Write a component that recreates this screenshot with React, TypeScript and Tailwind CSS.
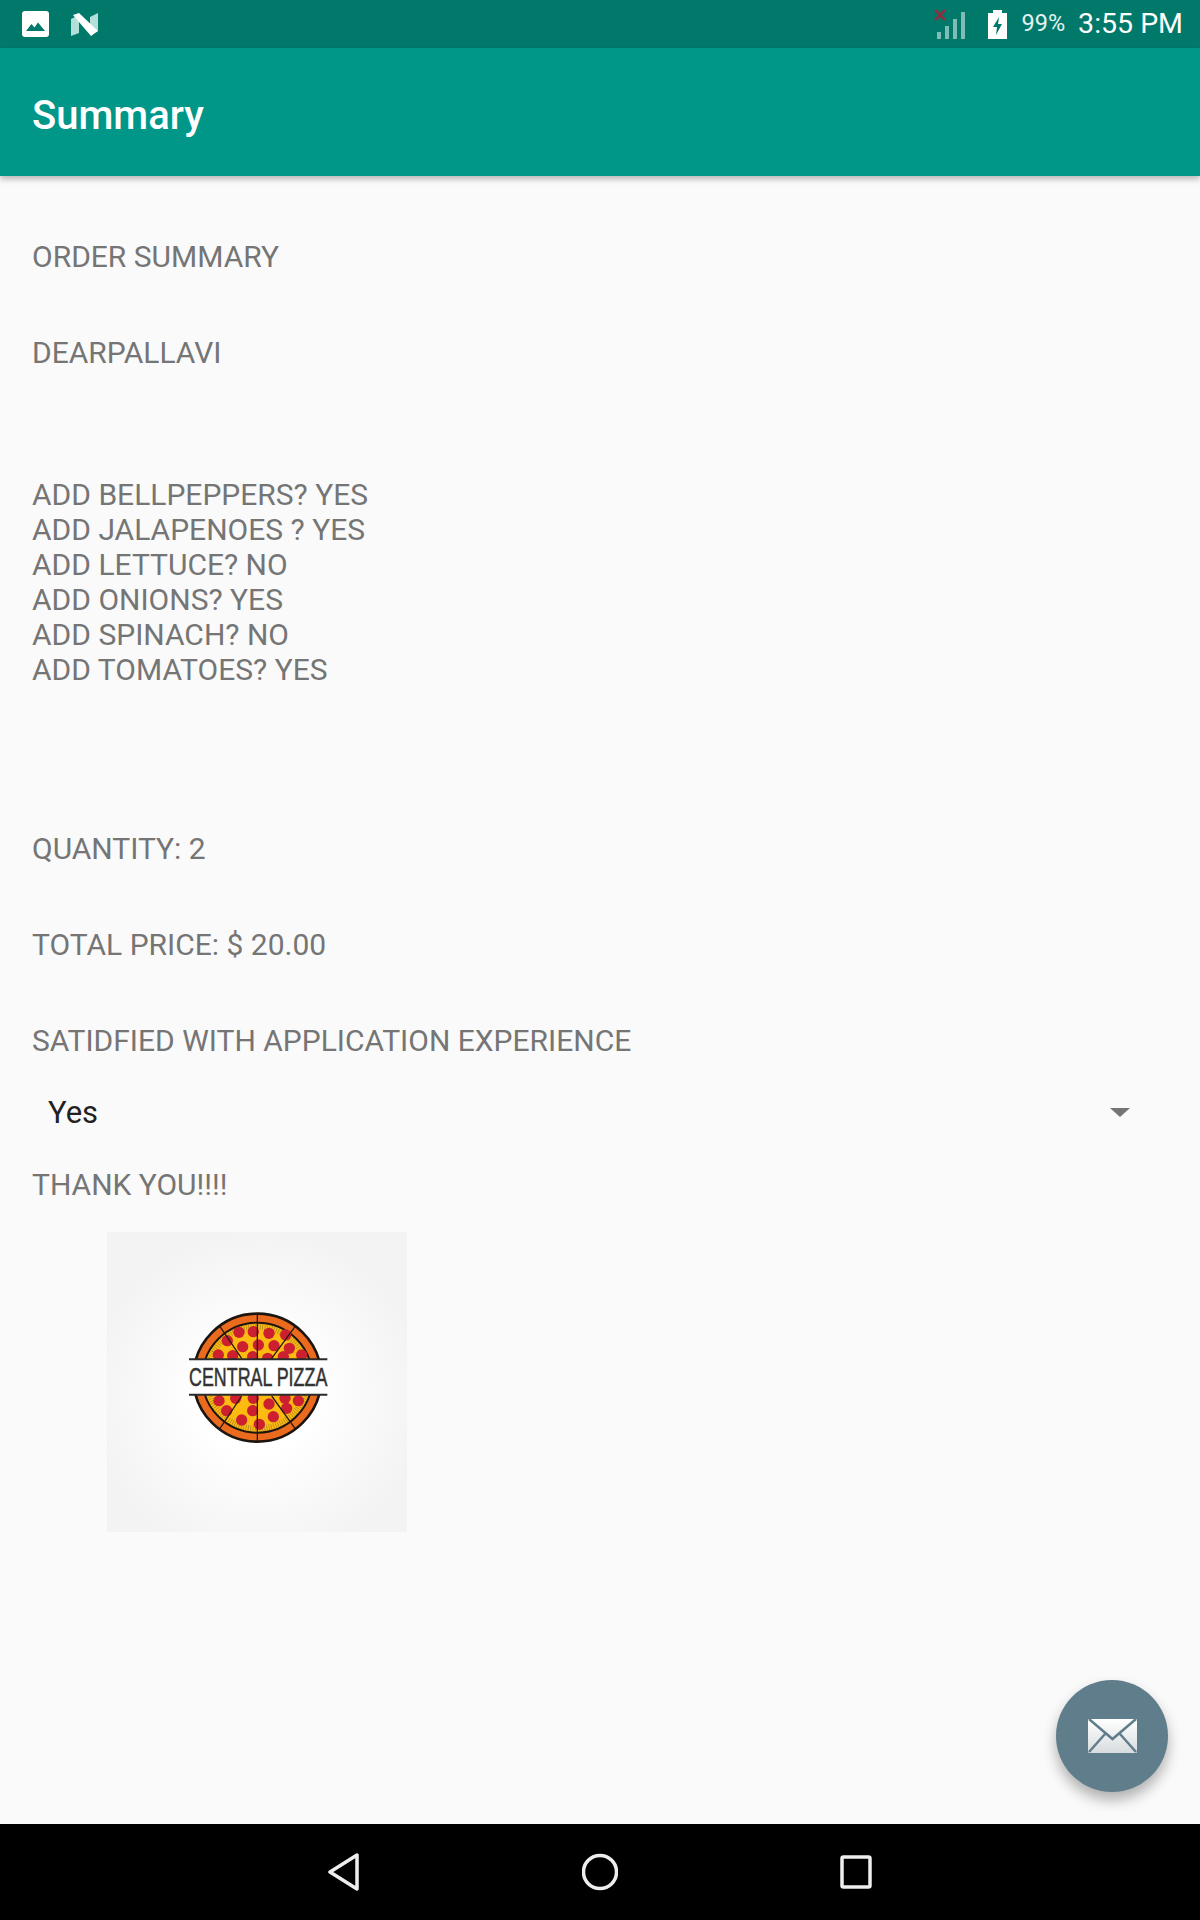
const toppings = [
  "ADD BELLPEPPERS? YES",
  "ADD JALAPENOES ? YES",
  "ADD LETTUCE? NO",
  "ADD ONIONS? YES",
  "ADD SPINACH? NO",
  "ADD TOMATOES? YES",
];

// pepperoni centres, in the logo's own coordinates
const pepperoni = [
  [207, 127], [250, 125], [297, 130], [347, 135], [172, 152], [218, 170], [265, 165], [312, 167],
  [358, 175], [145, 195], [188, 197], [395, 195], [340, 200], [248, 200], [293, 205],
  [147, 332], [197, 325], [250, 325], [297, 342], [345, 325], [385, 332], [170, 362], [248, 362],
  [350, 355], [215, 390], [310, 380], [268, 403],
];

function PizzaLogo() {
  return (
    <svg viewBox="-189 -174 900 900" className="w-full h-full">
      <defs>
        <clipPath id="top-half">
          <rect x="0" y="0" width="520" height="208" />
        </clipPath>
        <clipPath id="bottom-half">
          <rect x="0" y="314" width="520" height="200" />
        </clipPath>
      </defs>
      {["url(#top-half)", "url(#bottom-half)"].map((clip) => (
        <g key={clip} clipPath={clip}>
          <circle cx="262" cy="263" r="192" fill="#ea6a1e" stroke="#1c1410" strokeWidth="8" />
          <circle cx="262" cy="263" r="165" fill="#fdbb12" stroke="#1c1410" strokeWidth="6" />
          <circle cx="262" cy="263" r="153" fill="none" stroke="#a8801a" strokeWidth="18" strokeDasharray="2 5" />
          {pepperoni.map(([x, y]) => (
            <circle key={`${x}-${y}`} cx={x} cy={y} r="17" fill="#cc2030" />
          ))}
          <path
            d="M262 68V458M150 110L215 205M375 110L305 205M150 415L215 318M375 415L305 318"
            stroke="#2a1a10"
            strokeWidth="4"
            fill="none"
          />
        </g>
      ))}
      <path d="M57 208H472M57 314H472" stroke="#2b2b2b" strokeWidth="6" />
      <text
        x="57"
        y="287"
        textLength="415"
        lengthAdjust="spacingAndGlyphs"
        fontSize="80"
        fill="#333333"
        stroke="#333333"
        strokeWidth="1.500"
        style={{ fontFamily: '"Liberation Sans", sans-serif' }}
      >
        CENTRAL PIZZA
      </text>
    </svg>
  );
}

export default function App() {
  return (
    <div className="w-[1200px] h-[1920px] flex flex-col bg-[#fafafa] overflow-hidden font-['Roboto',sans-serif]">
      {/* status bar */}
      <div className="h-12 shrink-0 bg-[#00796b] flex items-center justify-between pl-[22px] pr-[17px] text-white">
        <div className="flex items-center gap-[21px]">
          <svg viewBox="0 0 27 26" className="w-[27px] h-[26px]">
            <rect width="27" height="26" rx="3" fill="#fff" />
            <path d="M4 20L9.500 13L12.500 16.500L16 11.500L23 20Z" fill="#00796b" />
          </svg>
          <svg viewBox="0 0 29 24" className="w-[29px] h-6">
            <path d="M1 7L9 3V21L1 24Z" fill="#b2dfd8" />
            <path d="M20 5L28 1V19L20 22Z" fill="#b2dfd8" />
            <path d="M3 3L9 1L28 19L21 24Z" fill="#fff" />
          </svg>
        </div>
        <div className="flex items-center">
          <svg viewBox="0 0 32 30" className="w-8 h-[30px] mr-[22px]">
            <rect x="3" y="23" width="4" height="7" fill="#fff" fillOpacity="0.5" />
            <rect x="11" y="17" width="4" height="13" fill="#fff" fillOpacity="0.5" />
            <rect x="19" y="10" width="4" height="20" fill="#fff" fillOpacity="0.5" />
            <rect x="27" y="3" width="4" height="27" fill="#fff" fillOpacity="0.5" />
            <path d="M1 1L11 11M11 1L1 11" stroke="#8e2f3d" strokeWidth="2.500" />
          </svg>
          <svg viewBox="0 0 19 29" className="w-[19px] h-[29px] mr-[14px]">
            <path d="M5 0H14V3H19V29H0V3H5Z" fill="#fff" />
            <path d="M11 7L5 17H9L8 25L14 14H10Z" fill="#00796b" />
          </svg>
          <span className="text-[23.500px] mr-[13px] text-white/90">99%</span>
          <span className="text-[28.500px]">3:55 PM</span>
        </div>
      </div>

      {/* app bar */}
      <div className="relative z-10 h-32 shrink-0 bg-[#009688] flex items-center pl-8 pt-[7px] shadow-[0_3px_6px_rgba(0,0,0,0.28)]">
        <h1 className="text-[40px] font-medium text-white">Summary</h1>
      </div>

      {/* content */}
      <div className="relative flex-1 pl-8 pt-[62.500px] text-[30px] leading-[35px] text-[#757575]">
        <p>ORDER SUMMARY</p>
        <p className="mt-[61px]">DEARPALLAVI</p>
        <div className="mt-[107.500px]">
          {toppings.map((t) => (
            <p key={t}>{t}</p>
          ))}
        </div>
        <p className="mt-[143.500px]">QUANTITY: 2</p>
        <p className="mt-[61px]">TOTAL PRICE: $ 20.00</p>
        <p className="mt-[61px]">SATIDFIED WITH APPLICATION EXPERIENCE</p>
        <div className="h-[109px] flex items-center justify-between pl-4 pr-[70px] text-[#212121]">
          <span className="text-[31px]">Yes</span>
          <svg viewBox="0 0 20 9" className="w-5 h-[9px]">
            <path d="M0 0H20L10 9Z" fill="#757575" />
          </svg>
        </div>
        <p>THANK YOU!!!!</p>
        <div className="ml-[75px] mt-[30.500px] w-[300px] h-[300px] bg-[radial-gradient(circle_at_50%_55%,#ffffff_25%,#f3f3f3_75%)]">
          <PizzaLogo />
        </div>

        <button className="absolute right-8 bottom-8 w-28 h-28 rounded-full bg-[#607d8b] flex items-center justify-center shadow-[0_8px_14px_rgba(0,0,0,0.3)]">
          <svg viewBox="0 0 49 34" className="w-[49px] h-[34px]">
            <defs>
              <linearGradient id="mail-fill" x1="0" y1="0" x2="0" y2="1">
                <stop offset="0" stopColor="#ffffff" />
                <stop offset="1" stopColor="#d8dcde" />
              </linearGradient>
            </defs>
            <rect width="49" height="34" rx="1" fill="url(#mail-fill)" />
            <path d="M1 0L24.500 20L48 0M1 33L17 15M48 33L32 15" stroke="#607d8b" strokeWidth="2.500" fill="none" />
          </svg>
        </button>
      </div>

      {/* nav bar */}
      <div className="h-24 shrink-0 bg-black flex items-center justify-center gap-[222px]">
        <svg viewBox="0 0 32 40" className="w-8 h-10">
          <path d="M29 3V37L2 20Z" fill="none" stroke="#eeeeee" strokeWidth="3.500" strokeLinejoin="round" />
        </svg>
        <svg viewBox="0 0 36 38" className="w-9 h-[38px]">
          <circle cx="18" cy="19" r="16.500" fill="none" stroke="#eeeeee" strokeWidth="3.500" />
        </svg>
        <svg viewBox="0 0 32 34" className="w-8 h-[34px]">
          <rect x="2" y="2" width="28" height="30" rx="1.500" fill="none" stroke="#eeeeee" strokeWidth="3.500" />
        </svg>
      </div>
    </div>
  );
}
